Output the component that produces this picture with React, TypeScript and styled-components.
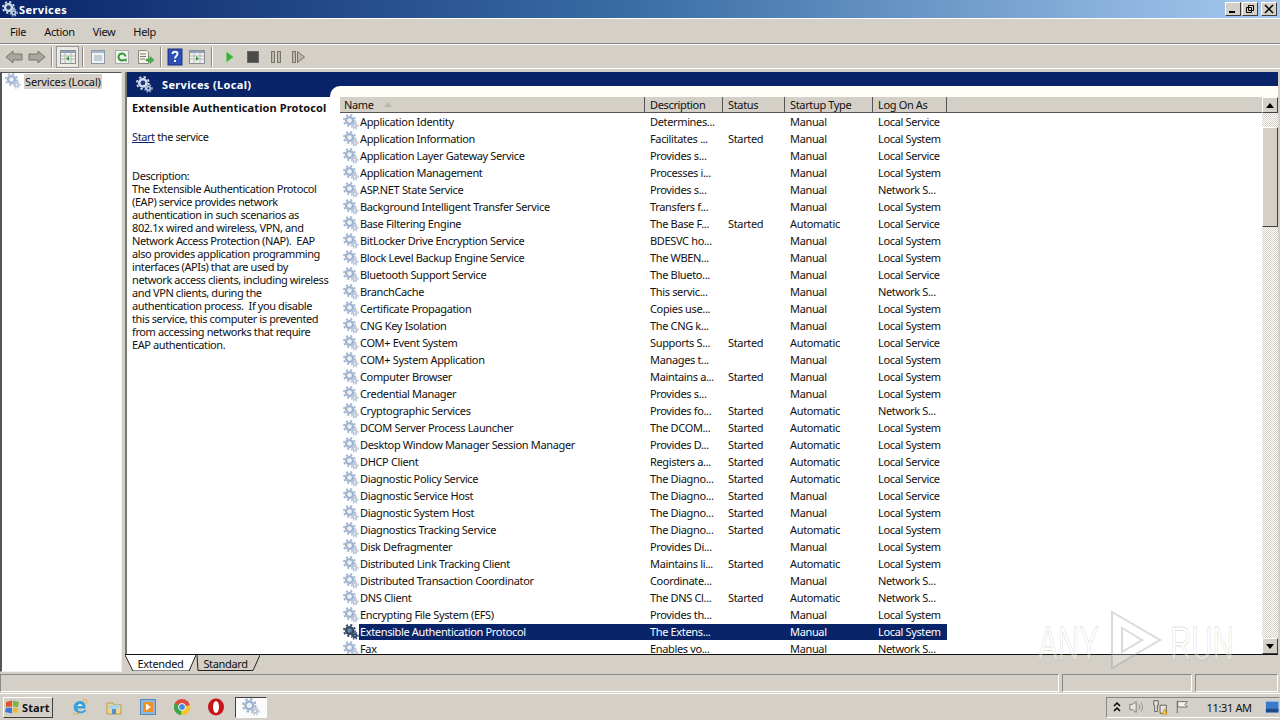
import React from 'react';
import styled, { createGlobalStyle } from 'styled-components';

const GlobalStyle = createGlobalStyle`
  html, body { margin: 0; padding: 0; width: 1280px; height: 720px; overflow: hidden; background: #d4d0c8; }
  body { font-family: "Noto Sans", "DejaVu Sans", sans-serif; font-size: 11px; color: #111; letter-spacing: -0.35px; }
  #root { width: 1280px; height: 720px; }
`;

const Screen = styled.div`
  position: relative; width: 1280px; height: 720px; display: flex; flex-direction: column;
  background: #d4d0c8; overflow: hidden;
`;
const TitleBar = styled.div`
  height: 19px; display: flex; align-items: center; gap: 1px; padding: 0 3px 1px 2px; box-sizing: border-box;
  background: linear-gradient(90deg, #0a246a 0%, #3a6ea5 50%, #a6caf0 100%) 0 0 / 100% 18px no-repeat #fff;
  flex: none;
`;
const TitleText = styled.span`color: #fff; font-weight: bold; font-size: 11px; flex: 1; letter-spacing: 0.4px;`;
const WinButton = styled.div<{ $gap?: number }>`
  width: 16px; height: 14px; background: #d4d0c8; display: flex; align-items: center; justify-content: center;
  border: 1px solid; border-color: #fff #404040 #404040 #fff; box-sizing: border-box; flex: none;
  margin-left: ${p => p.$gap ?? 2}px;
`;
const MenuBar = styled.div`
  height: 25px; flex: none; display: flex; align-items: center; padding-left: 10px; gap: 18px;
  border-bottom: 1px solid #888; box-sizing: border-box;
`;
const MenuItem = styled.span`font-size: 11px;`;
const Toolbar = styled.div`
  height: 24px; flex: none; display: flex; align-items: center; padding-left: 2px;
  border-top: 1px solid #fff; box-sizing: border-box;
`;
const ToolIcon = styled.div<{ $w?: number; $active?: boolean }>`
  width: ${p => p.$w ?? 23}px; height: 22px; display: flex; align-items: center; justify-content: center; flex: none;
  ${p => p.$active ? 'background:#ece9e2;border:1px solid #999;box-sizing:border-box;' : ''}
`;
const ToolSep = styled.div<{ $r?: number }>`
  width: 2px; height: 20px; margin: 0 ${p => p.$r ?? 3}px 0 3px; flex: none;
  border-left: 1px solid #888; border-right: 1px solid #fff; box-sizing: border-box;
`;
const Main = styled.div`
  height: 604px; flex: none; display: flex; box-sizing: border-box; padding-top: 3px;
  border-top: 1px solid #fff;
`;
const Tree = styled.div`
  width: 122px; flex: none; background: #fff; box-sizing: border-box; padding: 0 0 0 3px;
  border-left: 2px solid #555; border-top: 1px solid #555; border-right: 1px solid #f0f0f0; border-bottom: 1px solid #f0f0f0;
`;
const TreeRow = styled.div`display: flex; align-items: center; gap: 3px; height: 16px;`;
const TreeLabel = styled.span`background: #d4d0c8; padding: 0 1px; height: 15px; line-height: 15px; white-space: nowrap; letter-spacing: -0.15px;`;
const RightCol = styled.div`
  flex: 1; min-width: 0; margin-left: 3px; margin-right: 2px; display: flex; flex-direction: column;
`;
const Pane = styled.div`
  flex: 1; display: flex; flex-direction: column; min-height: 0; overflow: hidden;
  background: #fff; border-left: 2px solid #777;
`;
const PaneHeader = styled.div`height: 25px; flex: none; display: flex; background: #0a246a;`;
const PaneTitle = styled.div`
  width: 203px; flex: none; display: flex; align-items: center; gap: 9px; padding-left: 9px; box-sizing: border-box;
  color: #fff; font-weight: bold; font-size: 11px; letter-spacing: 0.35px;
`;
const PaneHeaderRest = styled.div`flex: 1; display: flex; flex-direction: column; justify-content: flex-end;`;
const PaneCurve = styled.div`height: 11px; background: #fffef8; border-top-left-radius: 10px;`;
const PaneBody = styled.div`flex: 1; display: flex; min-height: 0;`;
const Desc = styled.div`
  width: 213px; flex: none; box-sizing: border-box; padding: 4px 0 0 5px; line-height: 13px; font-size: 11px; letter-spacing: -0.4px;
`;
const DescTitle = styled.div`font-weight: bold; height: 29px; white-space: nowrap; letter-spacing: 0.1px;`;
const DescLink = styled.div`height: 39px;`;
const A = styled.span`color: #0a246a; text-decoration: underline;`;
const DescLine = styled.div`white-space: pre; height: 13px;`;
const ListWrap = styled.div`flex: 1; display: flex; min-width: 0; min-height: 0;`;
const List = styled.div`flex: 1; min-width: 0; overflow: hidden;`;
const Head = styled.div`
  display: flex; height: 16px; background: #d4d0c8; box-sizing: border-box; border-bottom: 1px solid #555;
`;
const HeadCell = styled.div<{ $w: number; $pad?: number }>`
  width: ${p => p.$w}px; flex: none; box-sizing: border-box; padding-left: ${p => p.$pad ?? 5}px; display: flex; align-items: center; gap: 10px;
  border-right: 1px solid #555; font-size: 11px;
`;
const Row = styled.div`display: flex; height: 17px; align-items: center; padding-left: 3px;`;
const Cell = styled.div<{ $w: number; $sel?: boolean }>`
  width: ${p => p.$w}px; flex: none; box-sizing: border-box; padding-left: 5px; white-space: nowrap; overflow: hidden;
  font-size: 11px; line-height: 16px; height: 16px;
  ${p => p.$sel ? 'background:#0a246a;color:#fff;' : ''}
`;
const NameCell = styled.div<{ $w: number }>`
  width: ${p => p.$w}px; flex: none; display: flex; height: 16px; line-height: 16px; white-space: nowrap; overflow: hidden;
`;
const NameIcon = styled.div`width: 16px; flex: none; height: 16px; display: flex; align-items: center;`;
const NameText = styled.div<{ $sel?: boolean }>`
  flex: 1; padding-left: 1px; ${p => p.$sel ? 'background:#0a246a;color:#fff;' : ''}
`;
const Scroll = styled.div`
  width: 16px; flex: none; display: flex; flex-direction: column;
  background: repeating-conic-gradient(#d4d0c8 0 25%, #fff 0 50%) 0 0 / 2px 2px;
`;
const ScrollBtn = styled.div`
  width: 16px; height: 16px; background: #d4d0c8; box-sizing: border-box; flex: none;
  border: 1px solid; border-color: #fff #404040 #404040 #fff;
  display: flex; align-items: center; justify-content: center;
`;
const Thumb = styled.div`
  width: 16px; height: 100px; margin-top: 14px; background: #d4d0c8; box-sizing: border-box; flex: none;
  border: 1px solid; border-color: #fff #404040 #404040 #fff;
`;
const Track = styled.div`flex: 1;`;
const Tabs = styled.div`
  height: 18px; flex: none; display: flex; align-items: flex-start;
  border-top: 1px solid #111; box-sizing: border-box;
`;
const TabShape = styled.div<{ $w: number; $pr?: number }>`
  position: relative; width: ${p => p.$w}px; height: 16px; flex: none; box-sizing: border-box; padding-right: ${p => p.$pr ?? 0}px;
  display: flex; align-items: center; justify-content: center;
`;
const TabSvg = styled.svg`position: absolute; inset: 0;`;
const TabLabel = styled.span`position: relative;`;
const Status = styled.div`
  height: 21px; flex: none; display: flex; padding: 2px 2px 1px 0; box-sizing: border-box; gap: 3px;
`;
const StatusCell = styled.div<{ $w?: number }>`
  ${p => p.$w ? `width:${p.$w}px;flex:none;` : 'flex:1;'}
  box-sizing: border-box; border: 1px solid; border-color: #888 #fff #fff #888;
`;
const Taskbar = styled.div`
  height: 27px; flex: none; display: flex; align-items: center; padding-left: 3px; box-sizing: border-box;
  border-top: 1px solid #fff; background: #d4d0c8;
`;
const StartBtn = styled.div`
  width: 50px; height: 21px; box-sizing: border-box; flex: none; display: flex; align-items: center; gap: 0; padding-left: 0;
  border: 1px solid; border-color: #fff #404040 #404040 #fff; font-weight: bold; font-size: 11px; letter-spacing: 0.1px;
`;
const Quick = styled.div`display: flex; align-items: center; margin-left: 17px; gap: 14px;`;
const QuickIcon = styled.div`width: 20px; height: 20px; flex: none; display: flex; align-items: center; justify-content: center;`;
const TaskItem = styled.div`
  width: 32px; height: 21px; margin-left: 9px; background: #fbfbfb; box-sizing: border-box; flex: none;
  border: 1px solid; border-color: #404040 #fff #fff #404040; display: flex; align-items: center; justify-content: center;
`;
const Spacer = styled.div`flex: 1;`;
const Tray = styled.div`
  width: 174px; height: 21px; flex: none; box-sizing: border-box; display: flex; align-items: center; padding-left: 6px; gap: 7px;
  border: 1px solid; border-color: #888 #d4d0c8 #fff #888;
`;
const Clock = styled.span`margin-left: 10px; white-space: nowrap;`;
const Watermark = styled.div`
  position: absolute; left: 1038px; top: 608px; width: 196px; height: 64px; display: flex; align-items: center; justify-content: space-between;
  pointer-events: none;
`;
const WaterText = styled.span`
  display: inline-block; width: 64px; font: 48px "Liberation Sans", sans-serif; transform: scaleX(.62); transform-origin: left center;
  -webkit-text-stroke: 1px rgba(150,150,150,.28); -webkit-text-fill-color: rgba(255,255,255,.35); margin-top: 6px; white-space: nowrap;
`;

const Gear: React.FC<{ size?: number; dark?: boolean; light?: boolean }> = ({ size = 16, dark, light }) => {
  const c1 = dark ? '#2f4560' : light ? '#d5e0ee' : '#9fb3cf';
  const c2 = dark ? '#2f4560' : light ? '#b8cade' : '#b9c6d8';
  const hole = dark ? '#6f87a6' : light ? '#1e3a78' : '#eef2f7';
  return (
    <svg width={size} height={size} viewBox="0 0 16 16">
      <circle cx="6.5" cy="6.5" r="4.6" fill={c1} />
      <circle cx="6.5" cy="6.5" r="5.6" fill="none" stroke={c1} strokeWidth="1.7" strokeDasharray="2.2 2.2" />
      <circle cx="6.5" cy="6.5" r="2.3" fill={hole} />
      <circle cx="11.7" cy="11.7" r="2.6" fill={c2} />
      <circle cx="11.7" cy="11.700" r="3.4" fill="none" stroke={c2} strokeWidth="1.2" strokeDasharray="1.4 1.4" />
      <circle cx="11.7" cy="11.7" r="1" fill={hole} />
    </svg>
  );
};

const rows: [string, string, string, string, string][] = [
  ['Application Identity','Determines...','','Manual','Local Service'],
  ['Application Information','Facilitates ...','Started','Manual','Local System'],
  ['Application Layer Gateway Service','Provides s...','','Manual','Local Service'],
  ['Application Management','Processes i...','','Manual','Local System'],
  ['ASP.NET State Service','Provides s...','','Manual','Network S...'],
  ['Background Intelligent Transfer Service','Transfers f...','','Manual','Local System'],
  ['Base Filtering Engine','The Base F...','Started','Automatic','Local Service'],
  ['BitLocker Drive Encryption Service','BDESVC ho...','','Manual','Local System'],
  ['Block Level Backup Engine Service','The WBEN...','','Manual','Local System'],
  ['Bluetooth Support Service','The Blueto...','','Manual','Local Service'],
  ['BranchCache','This servic...','','Manual','Network S...'],
  ['Certificate Propagation','Copies use...','','Manual','Local System'],
  ['CNG Key Isolation','The CNG k...','','Manual','Local System'],
  ['COM+ Event System','Supports S...','Started','Automatic','Local Service'],
  ['COM+ System Application','Manages t...','','Manual','Local System'],
  ['Computer Browser','Maintains a...','Started','Manual','Local System'],
  ['Credential Manager','Provides s...','','Manual','Local System'],
  ['Cryptographic Services','Provides fo...','Started','Automatic','Network S...'],
  ['DCOM Server Process Launcher','The DCOM...','Started','Automatic','Local System'],
  ['Desktop Window Manager Session Manager','Provides D...','Started','Automatic','Local System'],
  ['DHCP Client','Registers a...','Started','Automatic','Local Service'],
  ['Diagnostic Policy Service','The Diagno...','Started','Automatic','Local Service'],
  ['Diagnostic Service Host','The Diagno...','Started','Manual','Local Service'],
  ['Diagnostic System Host','The Diagno...','Started','Manual','Local System'],
  ['Diagnostics Tracking Service','The Diagno...','Started','Automatic','Local System'],
  ['Disk Defragmenter','Provides Di...','','Manual','Local System'],
  ['Distributed Link Tracking Client','Maintains li...','Started','Automatic','Local System'],
  ['Distributed Transaction Coordinator','Coordinate...','','Manual','Network S...'],
  ['DNS Client','The DNS Cl...','Started','Automatic','Network S...'],
  ['Encrypting File System (EFS)','Provides th...','','Manual','Local System'],
  ['Extensible Authentication Protocol','The Extens...','','Manual','Local System'],
  ['Fax','Enables vo...','','Manual','Network S...'],
];
const widths = [305, 78, 62, 88, 74];
const descLines = [
  'Description:',
  'The Extensible Authentication Protocol',
  '(EAP) service provides network',
  'authentication in such scenarios as',
  '802.1x wired and wireless, VPN, and',
  'Network Access Protection (NAP).  EAP',
  'also provides application programming',
  'interfaces (APIs) that are used by',
  'network access clients, including wireless',
  'and VPN clients, during the',
  'authentication process.  If you disable',
  'this service, this computer is prevented',
  'from accessing networks that require',
  'EAP authentication.',
];

const Arrow: React.FC<{ dir: 'l' | 'r' }> = ({ dir }) => (
  <svg width="18" height="16" viewBox="0 0 18 16">
    <path d={dir === 'l' ? 'M1 8 L8 2 V5 H17 V11 H8 V14 Z' : 'M17 8 L10 2 V5 H1 V11 H10 V14 Z'} fill="#a8a69e" stroke="#77756e" />
  </svg>
);
const Window16: React.FC<{ children?: React.ReactNode }> = ({ children }) => (
  <svg width="16" height="16" viewBox="0 0 16 16">
    <rect x=".5" y="1.500" width="15" height="13" fill="#efeee8" stroke="#8b8f93" />
    <rect x="1" y="2" width="14" height="2" fill="#8fa3b8" />
    <path d="M1 7h14M1 10h14M5 4v10M11 4v10" stroke="#b5bbc0" />
    {children}
  </svg>
);

export default function App() {
  return (
    <Screen>
      <GlobalStyle />
      <TitleBar>
        <Gear size={16} light />
        <TitleText>Services</TitleText>
        <WinButton><svg width="10" height="10"><rect x="1" y="7" width="6" height="2" fill="#000" /></svg></WinButton>
        <WinButton $gap={0}><svg width="10" height="10"><path d="M3.500 1.500h5v5h-5zM1.500 3.500h5v5h-5z" fill="#d4d0c8" stroke="#000" /></svg></WinButton>
        <WinButton><svg width="10" height="10"><path d="M1 1l8 8M9 1l-8 8" stroke="#000" strokeWidth="1.500" /></svg></WinButton>
      </TitleBar>
      <MenuBar>
        <MenuItem>File</MenuItem><MenuItem>Action</MenuItem><MenuItem>View</MenuItem><MenuItem>Help</MenuItem>
      </MenuBar>
      <Toolbar>
        <ToolIcon><Arrow dir="l" /></ToolIcon>
        <ToolIcon><Arrow dir="r" /></ToolIcon>
        <ToolSep />
        <ToolIcon $active><Window16><path d="M9 7v5L6 9.500z" fill="#3a9a40" /></Window16></ToolIcon>
        <ToolSep $r={2} />
        <ToolIcon><svg width="16" height="16" viewBox="0 0 16 16"><rect x="1.500" y="1.500" width="13" height="13" fill="#f3f3ee" stroke="#8b9aa8" /><rect x="2" y="2" width="12" height="2" fill="#a8b6c4" /><path d="M4 7h8M4 9h8M4 11h8" stroke="#8fa8c0" /></svg></ToolIcon>
        <ToolIcon $w={25}><svg width="16" height="16" viewBox="0 0 16 16"><rect x="1.500" y="1.500" width="13" height="13" fill="#f3f3ee" stroke="#a8aeb0" /><path d="M11.500 7.500a3.500 3.500 0 1 0-1 3" fill="none" stroke="#2f9a3a" strokeWidth="2" /><path d="M12.500 13l-3-2 3-2z" fill="#2f9a3a" /></svg></ToolIcon>
        <ToolIcon><svg width="18" height="16" viewBox="0 0 18 16"><path d="M1.500 1.500h8l2 2v11h-10z" fill="#f5f4e6" stroke="#8a8a80" /><path d="M3 5h6M3 7.500h6M3 10h5" stroke="#777" /><path d="M9 10h4V7.500l4 3.500-4 3.500V12H9z" fill="#46b050" stroke="#2f8a3a" strokeWidth=".5" /></svg></ToolIcon>
        <ToolSep $r={2} />
        <ToolIcon $w={22}><svg width="16" height="18" viewBox="0 0 16 18"><rect x="1" y="1" width="14" height="16" fill="#2f4fb8" stroke="#1c2f80" /><path d="M5.500 6c0-3 5-3 5 0 0 2-2.500 2-2.500 4.500" fill="none" stroke="#fff" strokeWidth="1.800" /><rect x="7" y="12" width="2" height="2" fill="#fff" /></svg></ToolIcon>
        <ToolIcon $w={22}><Window16><path d="M7 7v5l3-2.500z" fill="#3a9a40" /></Window16></ToolIcon>
        <ToolSep $r={5} />
        <ToolIcon><svg width="12" height="14" viewBox="0 0 12 14"><path d="M2 1l8 6-8 6z" fill="#3fae3a" stroke="#b8e0b0" /></svg></ToolIcon>
        <ToolIcon><svg width="14" height="14"><rect x="1.500" y="1.500" width="11" height="11" fill="#4a4a46" stroke="#666" /></svg></ToolIcon>
        <ToolIcon><svg width="12" height="14"><rect x="1.500" y="1.500" width="3" height="11" fill="#bab6ae" stroke="#77756e" /><rect x="7.500" y="1.500" width="3" height="11" fill="#bab6ae" stroke="#77756e" /></svg></ToolIcon>
        <ToolIcon><svg width="14" height="14"><rect x=".5" y="1.500" width="3" height="11" fill="#bab6ae" stroke="#77756e" /><path d="M5.500 1.500l7 5.500-7 5.500z" fill="#bab6ae" stroke="#77756e" /></svg></ToolIcon>
      </Toolbar>
      <Main>
        <Tree>
          <TreeRow><Gear size={16} /><TreeLabel>Services (Local)</TreeLabel></TreeRow>
        </Tree>
        <RightCol>
          <Pane>
            <PaneHeader>
              <PaneTitle><Gear size={17} light />Services (Local)</PaneTitle>
              <PaneHeaderRest><PaneCurve /></PaneHeaderRest>
            </PaneHeader>
            <PaneBody>
              <Desc>
                <DescTitle>Extensible Authentication Protocol</DescTitle>
                <DescLink><A>Start</A> the service</DescLink>
                {descLines.map(l => <DescLine key={l}>{l}</DescLine>)}
              </Desc>
              <ListWrap>
                <List>
                  <Head>
                    <HeadCell $w={widths[0]} $pad={4}>Name<svg width="8" height="5"><path d="M0 5L4 0l4 5z" fill="#b8b8b0" /></svg></HeadCell>
                    <HeadCell $w={widths[1]}>Description</HeadCell>
                    <HeadCell $w={widths[2]}>Status</HeadCell>
                    <HeadCell $w={widths[3]}>Startup Type</HeadCell>
                    <HeadCell $w={widths[4]}>Log On As</HeadCell>
                  </Head>
                  {rows.map(r => {
                    const sel = r[0].startsWith('Extensible');
                    return (
                      <Row key={r[0]}>
                        <NameCell $w={widths[0] - 3}>
                          <NameIcon><Gear size={16} dark={sel} /></NameIcon>
                          <NameText $sel={sel}>{r[0]}</NameText>
                        </NameCell>
                        <Cell $w={widths[1]} $sel={sel}>{r[1]}</Cell>
                        <Cell $w={widths[2]} $sel={sel}>{r[2]}</Cell>
                        <Cell $w={widths[3]} $sel={sel}>{r[3]}</Cell>
                        <Cell $w={widths[4]} $sel={sel}>{r[4]}</Cell>
                      </Row>
                    );
                  })}
                </List>
                <Scroll>
                  <ScrollBtn><svg width="8" height="5"><path d="M0 5L4 0l4 5z" fill="#000" /></svg></ScrollBtn>
                  <Thumb />
                  <Track />
                  <ScrollBtn><svg width="8" height="5"><path d="M0 0L4 5l4-5z" fill="#000" /></svg></ScrollBtn>
                </Scroll>
              </ListWrap>
            </PaneBody>
          </Pane>
          <Tabs>
            <TabShape $w={71}>
              <TabSvg width="71" height="16"><path d="M0 0L8 16H64L71 0" fill="#fff" stroke="#222" /></TabSvg>
              <TabLabel>Extended</TabLabel>
            </TabShape>
            <TabShape $w={64} $pr={5}>
              <TabSvg width="64" height="16"><path d="M1 0L2 15.500H57L64 0" fill="#d4d0c8" stroke="#222" /></TabSvg>
              <TabLabel>Standard</TabLabel>
            </TabShape>
          </Tabs>
        </RightCol>
      </Main>
      <Status>
        <StatusCell />
        <StatusCell $w={130} />
        <StatusCell $w={83} />
      </Status>
      <Taskbar>
        <StartBtn>
          <svg width="18" height="16" viewBox="0 0 18 16"><path d="M2 3l6-1.500v6l-6 .5z" fill="#e0562a" /><path d="M9 1.500l6 1.500-1 5-5-.5z" fill="#7cb83a" /><path d="M2 9l6-.5v6L1 13z" fill="#3a78d8" /><path d="M9 8.500l5 .5-1 5-4-.5z" fill="#f0b92a" /></svg>
          Start
        </StartBtn>
        <Quick>
          <QuickIcon><svg width="18" height="18" viewBox="0 0 18 18"><path d="M14.500 10.500H6.500c.3 3 4.500 4 6.500 1.500h2.500C13.500 16 7 16.500 4 13 1 9 3.500 3 9.500 3c3.500 0 5.500 3 5 7.500z" fill="#3aa0dc" /><path d="M6.500 8h5c-.3-2.500-4.500-2.500-5 0z" fill="#fff" /><path d="M3 14c-2 3 2 3 5 1M12 2c3-1.500 5 0 3 4" fill="none" stroke="#e8b030" /></svg></QuickIcon>
          <QuickIcon><svg width="18" height="18" viewBox="0 0 18 18"><path d="M2 5h6l1 2h7v9H2z" fill="#f0d68a" stroke="#b89a50" /><rect x="4" y="7" width="10" height="4" fill="#a8d4ec" /><rect x="7" y="11" width="4" height="5" fill="#4f90c8" /></svg></QuickIcon>
          <QuickIcon><svg width="18" height="18" viewBox="0 0 18 18"><rect x="1.500" y="1.500" width="15" height="15" fill="#8ab8e0" stroke="#5a88b8" /><rect x="4" y="4" width="10" height="10" rx="1" fill="#f09020" /><path d="M7 5.500l5 3.500-5 3.500z" fill="#fff" /></svg></QuickIcon>
          <QuickIcon><svg width="18" height="18" viewBox="0 0 18 18"><circle cx="9" cy="9" r="8" fill="#e04a3a" /><path d="M9 9L2 5a8 8 0 0 0 6 12z" fill="#3aa84a" /><path d="M9 9l8-2a8 8 0 0 1-9 10z" fill="#f2c82e" /><circle cx="9" cy="9" r="3.500" fill="#4a88e0" stroke="#fff" /></svg></QuickIcon>
          <QuickIcon><svg width="18" height="18" viewBox="0 0 18 18"><ellipse cx="9" cy="9" rx="8" ry="8.500" fill="#c8141a" /><ellipse cx="9" cy="9" rx="3" ry="6" fill="#fff" /></svg></QuickIcon>
        </Quick>
        <TaskItem><Gear size={18} /></TaskItem>
        <Spacer />
        <Tray>
          <svg width="10" height="12"><path d="M1 5l3-3 3 3M1 10l3-3 3 3" fill="none" stroke="#000" strokeWidth="1.500" /></svg>
          <svg width="18" height="16" viewBox="0 0 18 16"><path d="M1 5h3l4-3v12l-4-3H1z" fill="#e8e6e0" stroke="#777" /><path d="M11 5c1 2 1 4 0 6M13.500 3c2 3 2 7 0 10" fill="none" stroke="#8a8a8a" /></svg>
          <svg width="18" height="18" viewBox="0 0 18 18"><path d="M2 2h5v5H6v7H3V7H2zM9 7h7v9H9z" fill="#e8e6e0" stroke="#555" /><path d="M11 17l3-6 3 6z" fill="#f2c82e" stroke="#9a7a10" strokeWidth=".5" /></svg>
          <svg width="16" height="16" viewBox="0 0 16 16"><path d="M2.500 1v14M3 2h11l-3 3 3 3H3z" fill="#f3f3f0" stroke="#666" /></svg>
          <Clock>11:31 AM</Clock>
          <svg width="16" height="14" viewBox="0 0 16 14" style={{ marginLeft: 6 }}><rect x=".5" y=".5" width="15" height="13" fill="#3a78c8" stroke="#bcd0e4" /><rect x="1" y="9" width="14" height="4" fill="#1c4a8a" /></svg>
        </Tray>
      </Taskbar>
      <Watermark>
        <WaterText>ANY</WaterText>
        <svg width="56" height="62" viewBox="0 0 56 62"><path d="M4 3L52 31 4 59zM14 19L34 31 14 43z" fill="rgba(255,255,255,.25)" stroke="rgba(150,150,150,.35)" strokeWidth="2" /></svg>
        <WaterText>RUN</WaterText>
      </Watermark>
    </Screen>
  );
}
